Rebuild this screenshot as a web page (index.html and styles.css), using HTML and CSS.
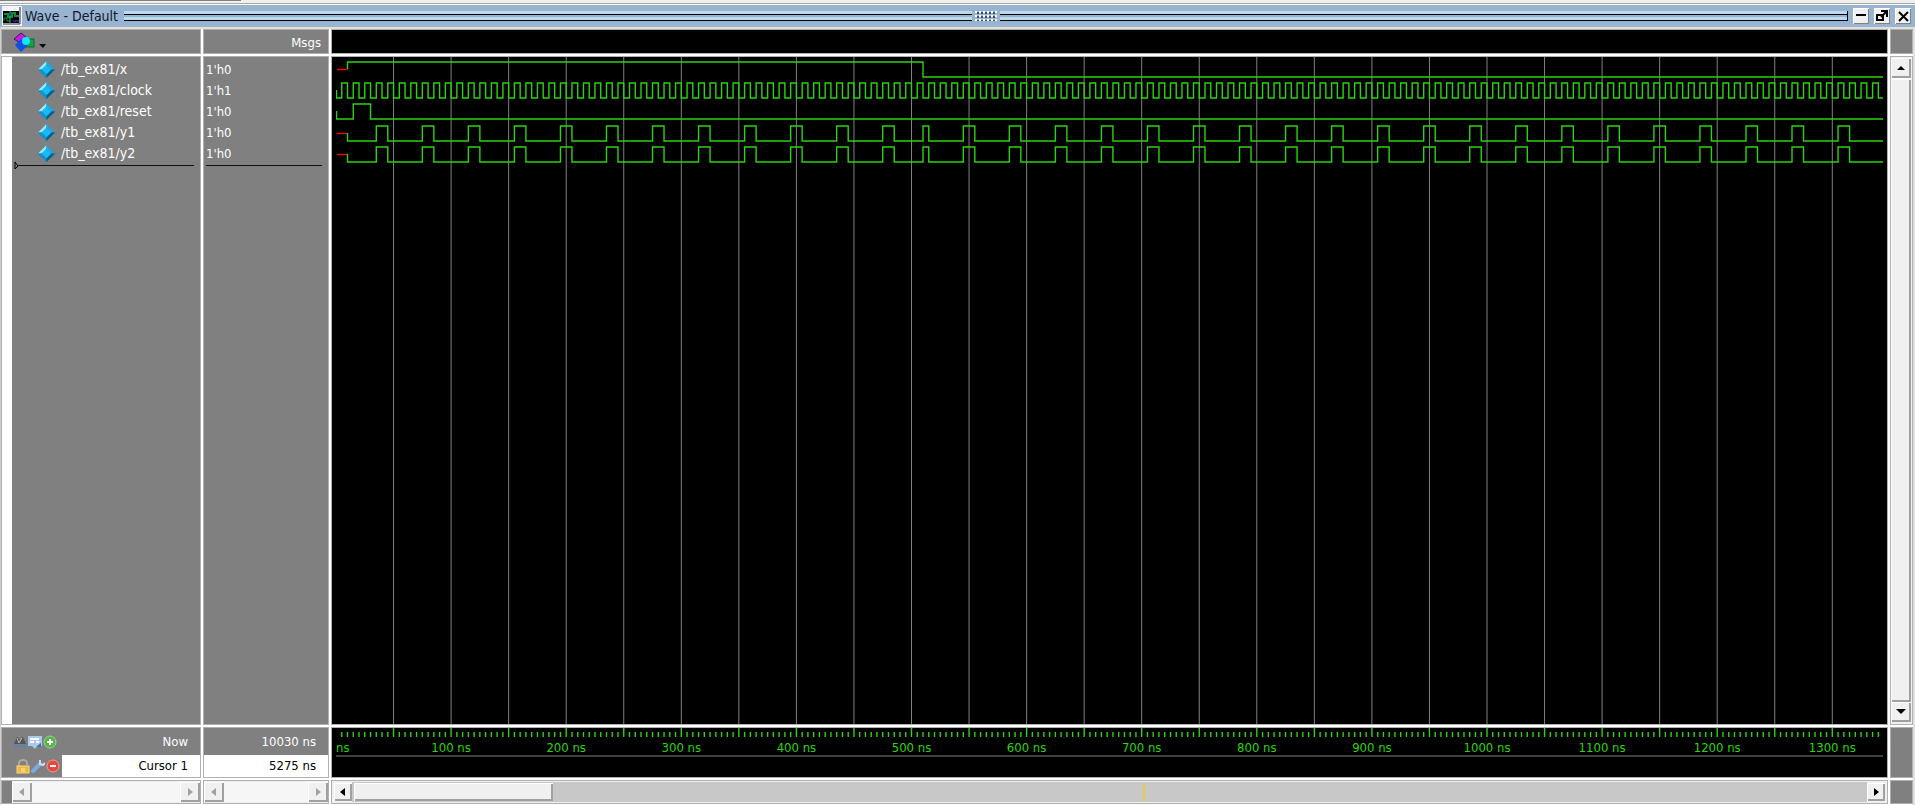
FILE: index.html
```html
<!DOCTYPE html>
<html lang="en">

<head>
    <meta charset="UTF-8">
    <meta name="viewport" content="width=device-width, initial-scale=1.0">
    <title>Wave - Default</title>
    <link rel="stylesheet" href="styles.css">
</head>

<body>

    <div class="top-strip"></div>

    <!-- Title bar -->
    <header class="titlebar">
        <svg class="app-icon" width="20" height="20" viewBox="0 0 20 20">
            <rect width="20" height="20" fill="#f4f4f4"/>
            <path d="M18 1v17H1" fill="none" stroke="#303030" stroke-width="1"/>
            <rect x="1" y="5" width="16" height="12" fill="#000"/>
            <path d="M2 8h4v3h4V7h3v3h4" fill="none" stroke="#0a8a3c" stroke-width="2"/>
            <path d="M2 15v-3h3v3h3" fill="none" stroke="#0a9a30" stroke-width="1"/>
            <path d="M8 5v12" stroke="#20b0b0" stroke-width="1"/>
            <path d="M11 15h6" stroke="#2a1a8a" stroke-width="2"/>
        </svg>
        <h1 class="title">Wave - Default</h1>
        <div class="rails"></div>
        <div class="grip"></div>
        <div class="rails rails-end"></div>
        <div class="window-buttons">
            <button type="button" class="win-btn" aria-label="Minimize">
                <svg width="16" height="16" viewBox="0 0 16 16"><path d="M3 7h10" stroke="#000" stroke-width="2"/></svg>
            </button>
            <button type="button" class="win-btn" aria-label="Undock">
                <svg width="16" height="16" viewBox="0 0 16 16">
                    <rect x="3" y="7" width="6" height="5" fill="none" stroke="#000" stroke-width="2"/>
                    <path d="M7 9l5-5M7 3h6v6" fill="none" stroke="#000" stroke-width="2"/>
                </svg>
            </button>
            <button type="button" class="win-btn" aria-label="Close">
                <svg width="16" height="16" viewBox="0 0 16 16"><path d="M4 4l9 9M13 4l-9 9" stroke="#000" stroke-width="2"/></svg>
            </button>
        </div>
    </header>

    <!-- Shared symbols -->
    <svg class="defs" width="0" height="0">
        <symbol id="gem" viewBox="0 0 20 20">
            <path d="M10 1L1 10l9 9 9-9z" fill="#0a84bd"/>
            <path d="M10 1L1 10h4l5-5z" fill="#a5e6fa"/>
            <path d="M10 1v4l5 5h4z" fill="#2fa2d8"/>
            <path d="M1 10l9 9v-4l-5-5z" fill="#1690ce"/>
            <path d="M19 10l-9 9v-4l5-5z" fill="#07608c"/>
            <path d="M10 5l-5 5 5 5 5-5z" fill="#14bdf5"/>
        </symbol>
        <symbol id="arrow-left" viewBox="0 0 10 10"><path d="M7 1v8L2 5z" fill="currentColor"/></symbol>
        <symbol id="arrow-right" viewBox="0 0 10 10"><path d="M3 1v8l5-4z" fill="currentColor"/></symbol>
        <symbol id="arrow-up" viewBox="0 0 10 10"><path d="M1 7h8L5 3z" fill="currentColor"/></symbol>
        <symbol id="arrow-down" viewBox="0 0 10 10"><path d="M0 2h10L5 7z" fill="currentColor"/></symbol>
    </svg>

    <main class="wave-window">

        <!-- Column headers -->
        <div class="cell names-head">
            <button type="button" class="filter-btn" aria-label="Object filter">
                <svg width="34" height="22" viewBox="0 0 34 22">
                    <path d="M1 8l7-6 5 4-6 6z" fill="#c31be0" stroke="#4c1060" stroke-width="1"/>
                    <rect x="12" y="8" width="9" height="8" fill="#16a344" stroke="#0a6a2c"/>
                    <path d="M8 8l7 6-7 7-6-7z" fill="#0b50e4"/>
                    <circle cx="13" cy="10" r="4" fill="#10e6fa"/>
                    <path d="M26 13h7l-3 4z" fill="#000"/>
                </svg>
            </button>
        </div>
        <div class="cell msgs-head">Msgs</div>
        <div class="cell wave-head"></div>
        <div class="cell corner"></div>

        <!-- Signals -->
        <div class="cell names">
            <ul class="signals">
                <li><svg class="gem"><use href="#gem"/></svg>/tb_ex81/x</li>
                <li><svg class="gem"><use href="#gem"/></svg>/tb_ex81/clock</li>
                <li><svg class="gem"><use href="#gem"/></svg>/tb_ex81/reset</li>
                <li><svg class="gem"><use href="#gem"/></svg>/tb_ex81/y1</li>
                <li><svg class="gem"><use href="#gem"/></svg>/tb_ex81/y2</li>
            </ul>
            <div class="insert-line">
                <svg width="5" height="9" viewBox="0 0 5 9"><path d="M1 1v7l3-3z" fill="none" stroke="#000"/></svg>
            </div>
        </div>
        <div class="cell values">
            <ul class="signals">
                <li>1'h0</li>
                <li>1'h1</li>
                <li>1'h0</li>
                <li>1'h0</li>
                <li>1'h0</li>
            </ul>
            <div class="insert-line"></div>
        </div>
        <div class="cell wave-area">
            <svg id="waves" class="plot"></svg>
        </div>
        <div class="cell vscroll">
            <button type="button" class="scroll-btn" aria-label="Scroll up"><svg class="arrow"><use href="#arrow-up"/></svg></button>
            <div class="vthumb"></div>
            <button type="button" class="scroll-btn" aria-label="Scroll down"><svg class="arrow"><use href="#arrow-down"/></svg></button>
        </div>

        <!-- Cursor footer -->
        <div class="cell cursor-names">
            <div class="now-row">
                <div class="tools">
                    <svg width="14" height="14" viewBox="0 0 14 14">
                        <path d="M1 9l3-7h1l2 4 2-4h1l3 7z" fill="#555"/>
                        <path d="M4 3l2 5 3-5" fill="none" stroke="#bbb"/>
                        <path d="M1 11h12M3 9l-2 2 2 2M11 9l2 2-2 2" fill="none" stroke="#4a86c8"/>
                    </svg>
                    <svg width="14" height="14" viewBox="0 0 14 14">
                        <path d="M0 1h14v10H9l-2 3-3-3H0z" fill="#a9c9ee"/>
                        <path d="M2 4h9M2 7h4M8 7h3" stroke="#fff" stroke-width="2"/>
                        <path d="M9 11l4-3v4z" fill="#3c6fae"/>
                    </svg>
                    <svg width="14" height="14" viewBox="0 0 14 14">
                        <circle cx="7" cy="7" r="6" fill="#58b548" stroke="#9ad68e"/>
                        <path d="M7 4v6M4 7h6" stroke="#fff" stroke-width="2"/>
                    </svg>
                </div>
                <span>Now</span>
            </div>
            <div class="cursor-row">
                <div class="tools tools-cursor">
                    <svg width="14" height="16" viewBox="0 0 14 16">
                        <path d="M3 8V5a4 3 0 0 1 8 0v2" fill="none" stroke="#b0a898" stroke-width="2"/>
                        <rect x="1" y="8" width="12" height="7" fill="#f2b838" stroke="#f8d680"/>
                        <path d="M5 11h4M5 13h4" stroke="#fff0b8"/>
                    </svg>
                    <svg width="14" height="16" viewBox="0 0 14 16">
                        <path d="M2 13l7-7" stroke="#7fa8e0" stroke-width="4" stroke-linecap="round"/>
                        <path d="M9 2v4l3 1 2-2" fill="none" stroke="#d4dce4" stroke-width="2"/>
                    </svg>
                    <svg width="14" height="16" viewBox="0 0 14 16">
                        <circle cx="7" cy="8" r="6" fill="#e8483c" stroke="#f49a90"/>
                        <path d="M4 8h6" stroke="#fff" stroke-width="2"/>
                    </svg>
                </div>
                <span class="cursor-name">Cursor 1</span>
            </div>
        </div>
        <div class="cell cursor-values">
            <div class="now-row"><span>10030 ns</span></div>
            <div class="cursor-row"><span class="cursor-name">5275 ns</span></div>
        </div>
        <div class="cell timeline">
            <svg id="timeline" class="plot"></svg>
        </div>
        <div class="cell corner"></div>

        <!-- Horizontal scroll bars -->
        <div class="cell hscroll names-scroll">
            <button type="button" class="scroll-btn" aria-label="Scroll names left" disabled><svg class="arrow"><use href="#arrow-left"/></svg></button>
            <div class="track"></div>
            <button type="button" class="scroll-btn" aria-label="Scroll names right" disabled><svg class="arrow"><use href="#arrow-right"/></svg></button>
        </div>
        <div class="cell hscroll">
            <button type="button" class="scroll-btn" aria-label="Scroll values left" disabled><svg class="arrow"><use href="#arrow-left"/></svg></button>
            <div class="track"></div>
            <button type="button" class="scroll-btn" aria-label="Scroll values right" disabled><svg class="arrow"><use href="#arrow-right"/></svg></button>
        </div>
        <div class="cell hscroll wave-scroll">
            <button type="button" class="scroll-btn" aria-label="Scroll waves left"><svg class="arrow"><use href="#arrow-left"/></svg></button>
            <div class="wave-track">
                <div class="hthumb"></div>
                <div class="cursor-mark"></div>
            </div>
            <button type="button" class="scroll-btn" aria-label="Scroll waves right"><svg class="arrow"><use href="#arrow-right"/></svg></button>
        </div>
        <div class="cell corner"></div>
    </main>

    <script src="wave.js"></script>
</body>

</html>
```
FILE: styles.css
```css
* {
    box-sizing: border-box;
}

body {
    display: flex;
    flex-direction: column;
    height: 100vh;
    margin: 0;
    overflow: hidden;
    background: #f0f0f0;
    color: #fff;
    font-family: "DejaVu Sans Condensed", "DejaVu Sans", sans-serif;
    font-size: 13px;
    line-height: 21px;
}

ul {
    list-style: none;
    margin: 0;
    padding: 0;
}

button {
    display: flex;
    align-items: center;
    justify-content: center;
    padding: 0;
    border: 0;
    background: none;
}

.defs {
    position: absolute;
}

.top-strip {
    flex: none;
    height: 5px;
    border-bottom: 1px solid #fff;
    background: linear-gradient(#808080, #808080) 0 0 / 241px 1px no-repeat, linear-gradient(#f0f0f0 3px, #a8a8a8 3px);
}

/* Title bar */
.titlebar {
    display: flex;
    flex: none;
    align-items: center;
    height: 22px;
    padding: 0 4px 0 2px;
    background: #99b4d1;
    color: #101828;
}

.app-icon {
    flex: none;
}

.title {
    margin: 0 6px 0 3px;
    font-size: 14px;
    font-weight: normal;
    white-space: nowrap;
}

.rails {
    flex: 1;
    height: 10px;
    background: linear-gradient(#b9dcec 3px, #000 3px, #000 4px, #99b4d1 4px, #99b4d1 6px, #b9dcec 6px, #b9dcec 9px, #000 9px);
}

.rails-end {
    border-right: 1px solid #000;
}

.grip {
    width: 22px;
    height: 10px;
    margin: 0 3px;
    background: radial-gradient(circle at 1px 1px, #fff 1px, transparent 1px) 0 0 / 4px 4px, radial-gradient(circle at 3px 2px, #40506a 1px, transparent 1px) 0 0 / 4px 4px;
}

.window-buttons {
    display: flex;
    gap: 5px;
    margin-left: 5px;
}

.win-btn {
    width: 16px;
    height: 16px;
    background: #f0f0f0;
    box-shadow: inset 1px 1px #fff, inset -1px -1px #808080;
}

/* Panes */
.wave-window {
    display: grid;
    flex: 1;
    grid-template-columns: 198px 124px 1fr 21px;
    grid-template-rows: 23px 1fr 49px 22px;
    gap: 4px;
    min-height: 0;
    padding: 3px 3px 2px 2px;
    background: #fff;
    box-shadow: inset 1px 0 #d0d0d0, inset -2px 0 #e0e0e0, inset 0 2px #e4e0d8;
}

.cell {
    min-width: 0;
    min-height: 0;
    background: #808080;
    box-shadow: 0 0 0 1px #b0b0b0;
}

.names-head {
    display: flex;
    padding-left: 11px;
}

.msgs-head {
    padding: 2px 7px 0 0;
    text-align: right;
}

.wave-head,
.wave-area,
.timeline {
    background: #000;
}

.names,
.values {
    padding-top: 2px;
}

.names {
    border-left: 10px solid #fff;
    font-size: 14px;
}

.signals li {
    display: flex;
    align-items: center;
    height: 21px;
    padding-left: 25px;
}

.values .signals li {
    padding-left: 2px;
}

.gem {
    width: 19px;
    height: 19px;
    margin-right: 5px;
}

.insert-line {
    display: flex;
    align-items: center;
    height: 9px;
    margin: -3px 6px 0 2px;
    background: linear-gradient(#101010, #101010) 4px 4px / 100% 1px no-repeat;
}

.values .insert-line {
    background-position: 0 4px;
}

.wave-area,
.timeline {
    padding: 0 4px;
}

.plot {
    display: block;
    width: 100%;
    height: 100%;
    overflow: hidden;
}

.grid-line {
    stroke: #808080;
}

.wave {
    fill: none;
    stroke: #2bd40f;
    stroke-width: 1.4;
}

.unknown {
    stroke: #f00;
    stroke-width: 1.4;
}

.tick {
    stroke: #2bd40f;
    stroke-width: 1.4;
}

.tick-label {
    fill: #2bd40f;
    text-anchor: middle;
}

.tick-label.first {
    text-anchor: start;
}

/* Footer */
.now-row,
.cursor-row {
    display: flex;
    align-items: center;
    justify-content: flex-end;
}

.now-row {
    height: 27px;
    padding-right: 12px;
}

.cursor-row {
    height: 22px;
}

.tools {
    display: flex;
    flex: 1;
    gap: 1px;
    padding-left: 11px;
}

.tools-cursor {
    flex: none;
    width: 60px;
    padding-left: 14px;
}

.cursor-name {
    flex: 1;
    height: 22px;
    padding-right: 12px;
    background: #fff;
    color: #000;
    text-align: right;
}

/* Scroll bars */
.scroll-btn {
    flex: none;
    width: 20px;
    height: 20px;
    background: #f0f0f0;
    box-shadow: inset 1px 1px #fff, inset -2px -2px #a0a0a0;
    color: #000;
}

.scroll-btn:disabled {
    color: #a0a0a0;
}

.arrow {
    width: 10px;
    height: 10px;
}

.hscroll {
    display: flex;
    align-items: center;
    background: #f0f0f0;
}

.names-scroll {
    border-left: 10px solid #808080;
}

.track {
    flex: 1;
    height: 20px;
    background: #f6f6f6;
}

.wave-scroll {
    padding: 0 2px;
}

.wave-scroll .scroll-btn {
    height: 18px;
    width: 18px;
}

.wave-track {
    position: relative;
    flex: 1;
    height: 20px;
    padding: 1px 2px;
    background: #c8c8c8;
}

.hthumb {
    width: 13.2%;
    height: 18px;
    background: #f0f0f0;
    box-shadow: inset 1px 1px #fff, inset -2px -2px #a0a0a0;
}

/* Position of cursor 1 over the whole run */
.cursor-mark {
    position: absolute;
    top: 2px;
    left: 52.2%;
    width: 2px;
    height: 17px;
    background: #ecc94b;
}

.vscroll {
    display: flex;
    flex-direction: column;
    padding: 1px 1px 2px 0;
    background: #f0f0f0;
}

.vthumb {
    flex: 1;
    width: 20px;
    border-top: 1px solid #fff;
    background: #f0f0f0;
    box-shadow: inset 1px 1px #fff, inset -2px -2px #a0a0a0;
}
```
FILE: wave.js
```js
var SCALE = 1.151; // pixels per ns
var ROW = 21;
var SVG = "http://www.w3.org/2000/svg";

var waves = document.getElementById("waves");
var timeline = document.getElementById("timeline");

function add(parent, name, attrs, text) {
    var el = document.createElementNS(SVG, name);
    for (var key in attrs) {
        el.setAttribute(key, attrs[key]);
    }
    if (text) {
        el.textContent = text;
    }
    parent.appendChild(el);
}

// edges: times in ns at which the signal toggles, level: value after start
function drawWave(row, start, level, edges, end) {
    var high = 5 + ROW * row + (row > 2 ? 1 : 0);
    var low = high + 15;
    var y = level ? high : low;
    var x = start * SCALE || 0.5;
    var d = "M" + x + " " + (high + 7) + "V" + y;

    if (start > 0) {
        add(waves, "path", { d: "M1 " + (high + 7.5) + "H" + x, "class": "unknown" });
    }
    edges.forEach(function (t) {
        if (t * SCALE > end) return;
        y = y === high ? low : high;
        d += "H" + t * SCALE + "V" + y;
    });
    add(waves, "path", { d: d + "H" + end, "class": "wave" });
}

function draw() {
    var end = waves.clientWidth;
    var last = end / SCALE;
    var clock = [];
    var y = [];
    var t;

    waves.innerHTML = "";
    timeline.innerHTML = "";

    for (t = 50; t < last; t += 50) {
        add(waves, "path", { d: "M" + t * SCALE + " 0V" + waves.clientHeight, "class": "grid-line" });
    }
    for (t = 5; t < last; t += 5) {
        clock.push(t);
        add(timeline, "path", { d: "M" + t * SCALE + " " + (t % 50 ? 4 : 0) + "V9", "class": "tick" });
    }
    add(timeline, "text", { x: 0, y: 24, "class": "tick-label first" }, "ns");
    for (t = 100; t < last; t += 100) {
        add(timeline, "text", { x: t * SCALE, y: 24, "class": "tick-label" }, t + " ns");
    }
    add(timeline, "path", { d: "M0 28H" + end, "class": "grid-line" });

    for (t = 35; t < 500; t += 40) {
        y.push(t, t + 10);
    }
    y.push(510, 515);
    for (t = 545; t < last; t += 40) {
        y.push(t, t + 10);
    }

    drawWave(0, 10, 1, [510], end);
    drawWave(1, 0, 0, clock, end);
    drawWave(2, 0, 0, [15, 30], end);
    drawWave(3, 10, 0, y, end);
    drawWave(4, 10, 0, y, end);
}

draw();
window.addEventListener("resize", draw);
```
